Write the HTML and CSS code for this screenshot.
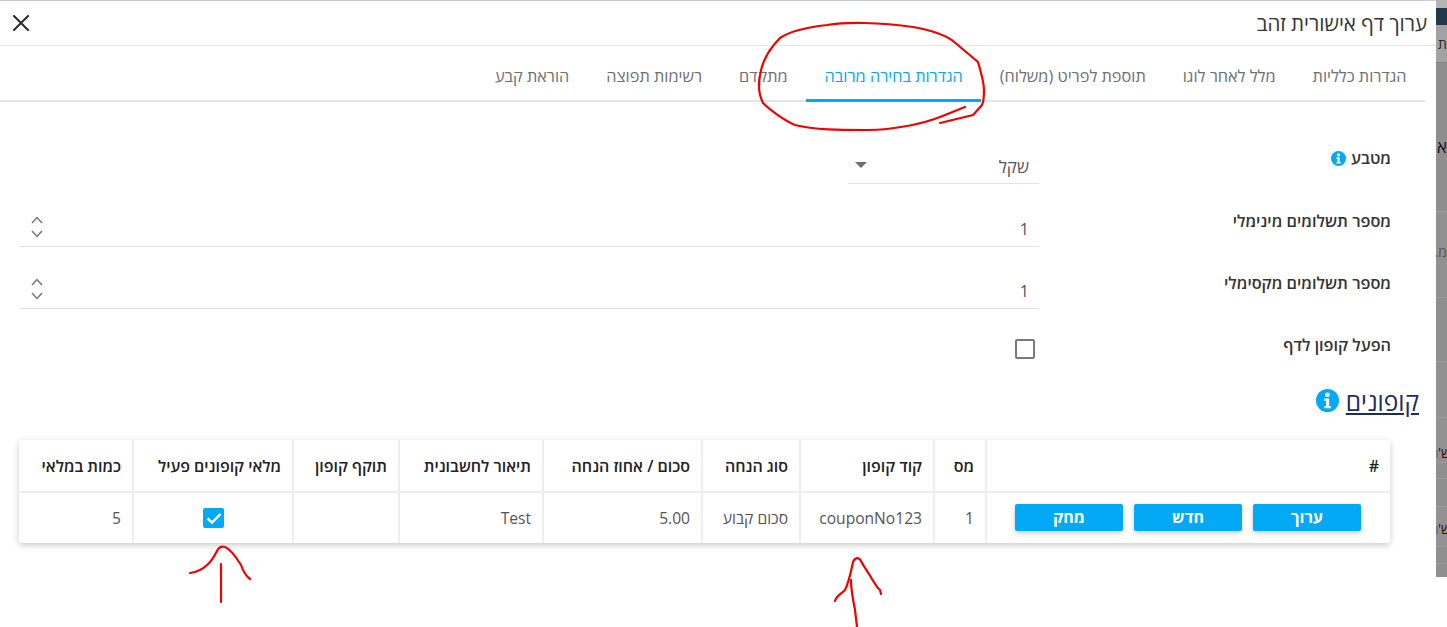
FILE: index.html
```html
<!DOCTYPE html>
<html lang="he" dir="rtl">
<head>
<meta charset="utf-8">
<title>ערוך דף אישורית זהב</title>
<link rel="stylesheet" href="styles.css">
</head>
<body>
<div class="stage">
  <aside class="backdrop">
    <div class="bd bd-top"></div>
    <div class="bd bd-nav"></div>
    <div class="bd bd-tab"><span>ת</span></div>
    <div class="bd bd-a"><span class="big">א</span></div>
    <div class="bd bd-b"><span class="dim">מ.</span></div>
    <div class="bd bd-c"></div>
    <div class="bd bd-d"></div>
    <div class="bd bd-e bd-mark"><i></i><span>ש'</span></div>
    <div class="bd bd-f"></div>
    <div class="bd bd-g"></div>
    <div class="bd bd-h bd-mark"><i></i><span>ש'</span></div>
    <div class="bd bd-i"></div>
    <div class="bd bd-j"></div>
  </aside>
  <main class="dialog">
    <header class="head">
      <h1 class="title">ערוך דף אישורית זהב</h1>
      <button class="close" aria-label="סגור">
        <svg width="16" height="16" viewBox="0 0 16 16"><path d="M1 1L15 15M15 1L1 15" stroke="#2b2b2b" stroke-width="2" fill="none" stroke-linecap="square"/></svg>
      </button>
    </header>
    <nav class="tabs">
      <a class="tab">הגדרות כלליות</a>
      <a class="tab">מלל לאחר לוגו</a>
      <a class="tab">תוספת לפריט (משלוח)</a>
      <a class="tab active">הגדרות בחירה מרובה</a>
      <a class="tab">מתקדם</a>
      <a class="tab">רשימות תפוצה</a>
      <a class="tab">הוראת קבע</a>
    </nav>
    <form class="form">
      <div class="row">
        <div class="label">מטבע
          <svg class="info-s" viewBox="0 0 22 22"><circle cx="11" cy="11" r="11" fill="#03a9f4"/><circle cx="11" cy="5.6" r="2.3" fill="#fff"/><path d="M8 9.2h4.6v7h1.6v2.2H8v-2.2h1.6v-4.8H8z" fill="#fff"/></svg>
        </div>
        <div class="select"><span>שקל</span><b class="caret"></b></div>
      </div>
      <div class="row">
        <div class="label">מספר תשלומים מינימלי</div>
        <div class="number"><span>1</span>
          <svg class="spin" width="12" height="24" viewBox="0 0 12 24"><path d="M1 7L6 1.5L11 7M1 15L6 20.5L11 15" fill="none" stroke="#777" stroke-width="1.5"/></svg>
        </div>
      </div>
      <div class="row">
        <div class="label">מספר תשלומים מקסימלי</div>
        <div class="number"><span>1</span>
          <svg class="spin" width="12" height="24" viewBox="0 0 12 24"><path d="M1 7L6 1.5L11 7M1 15L6 20.5L11 15" fill="none" stroke="#777" stroke-width="1.5"/></svg>
        </div>
      </div>
      <div class="row">
        <div class="label">הפעל קופון לדף</div>
        <div class="check-field"><span class="box"></span></div>
      </div>
    </form>
    <h2 class="section"><a class="section-link">קופונים</a>
      <svg class="info-l" viewBox="0 0 22 22"><circle cx="11" cy="11" r="11" fill="#03a9f4"/><circle cx="11" cy="5.6" r="2.3" fill="#fff"/><path d="M8 9.2h4.6v7h1.6v2.2H8v-2.2h1.6v-4.8H8z" fill="#fff"/></svg>
    </h2>
    <div class="card">
      <table class="grid">
        <colgroup>
          <col class="c1"><col class="c2"><col class="c3"><col class="c4"><col class="c5"><col class="c6"><col class="c7"><col class="c8"><col class="c9">
        </colgroup>
        <thead>
          <tr>
            <th>#</th><th>מס</th><th>קוד קופון</th><th>סוג הנחה</th><th>סכום / אחוז הנחה</th><th>תיאור לחשבונית</th><th>תוקף קופון</th><th>מלאי קופונים פעיל</th><th>כמות במלאי</th>
          </tr>
        </thead>
        <tbody>
          <tr>
            <td><div class="btns"><button type="button" class="btn">ערוך</button><button type="button" class="btn">חדש</button><button type="button" class="btn">מחק</button></div></td>
            <td>1</td><td>couponNo123</td><td>סכום קבוע</td><td>5.00</td><td>Test</td><td></td>
            <td class="center"><span class="checked"><svg width="20" height="20" viewBox="0 0 20 20"><path d="M3.5 10.5L8 14.5L16.5 6" fill="none" stroke="#fff" stroke-width="2.4"/></svg></span></td>
            <td>5</td>
          </tr>
        </tbody>
      </table>
    </div>
  </main>
  <svg class="marks" width="1447" height="627" viewBox="0 0 1447 627">
    <g fill="none" stroke="#f00000" stroke-width="2.2" stroke-linecap="round" stroke-linejoin="round">
      <path d="M965 107L940 117C925 123 895 130 867 130C840 130 815 130 795 125C785 121 770 110 763 103C759 95 758 85 760 75C762 62 768 50 780 38C790 31 810 27 827 25C845 22 880 22 913 27C930 30 945 35 953 41L978 62C981 72 984 82 984 90C984 98 983 103 982 105L973 115L940 123"/>
      <path d="M190 573C197 572 203 569 207 565C212 561 214 557 217 551C219 547 222 546 225 547C230 549 236 557 241 565C243 571 246 576 250 579"/>
      <path d="M221 564V602"/>
      <path d="M835 601C836 596 841 594 845 590C848 584 851 572 853 562C855 557 859 557 861 561C864 567 868 572 872 579C875 584 878 589 880 590L881 594"/>
      <path d="M851 580C851 590 853 600 855 610L857 627"/>
    </g>
  </svg>
</div>
</body>
</html>
```
FILE: styles.css
```css
* { box-sizing: border-box; }
html, body { margin: 0; padding: 0; background: #fff; }
body {
  font-family: "Open Sans", "Noto Sans", "Liberation Sans", sans-serif;
  font-size: 16px;
  color: #333;
  width: 1447px;
  height: 627px;
  overflow: hidden;
}
.stage {
  position: relative;
  display: flex;
  align-items: flex-start;
  width: 1447px;
  height: 627px;
  border-top: 1px solid #c6ccd1;
}
.backdrop {
  width: 11px;
  height: 577px;
  flex: none;
  background: #8d8d8d;
  display: flex;
  flex-direction: column;
  overflow: hidden;
  margin-top: -1px;
}
.bd {
  width: 11px;
  flex: none;
  border-bottom: 1px solid #9c9c9c;
  overflow: hidden;
  white-space: nowrap;
  font-size: 14px;
  line-height: 1;
  color: #2a2a2a;
}
.bd-top { height: 8px; background: #b4b4b4; border: 0; }
.bd-nav { height: 17px; background: #21384a; border: 0; }
.bd-tab { height: 38px; background: #a2a2a2; padding-top: 12px; border-color: #858585; }
.bd-a { height: 149px; padding-top: 75px; background: #8e8e8e; }
.bd-a .big { font-size: 17px; color: #14142a; }
.bd-b { height: 86px; padding-top: 33px; background: #909090; }
.bd-b .dim { color: #555; }
.bd-c { height: 64px; background: #8f8f8f; }
.bd-d { height: 56px; background: #919191; }
.bd-e { height: 45px; background: #929292; }
.bd-f { height: 16px; background: #8f8f8f; }
.bd-g { height: 28px; background: #8f8f8f; }
.bd-h { height: 40px; background: #929292; }
.bd-i { height: 17px; background: #8f8f8f; }
.bd-j { flex: 1; background: #8f8f8f; border: 0; }
.bd-mark {
  direction: ltr;
  display: flex;
  align-items: flex-start;
  color: #3a1010;
}
.bd-e.bd-mark { padding-top: 28px; }
.bd-h.bd-mark { padding-top: 15px; }
.bd-mark i { display: block; flex: none; width: 2px; height: 8px; margin-top: 4px; background: #6c7a94; }
.bd-mark span { direction: rtl; flex: none; }

.dialog {
  width: 1436px;
  height: 626px;
  flex: none;
  background: #fff;
  border-radius: 0 5px 0 0;
  display: flex;
  flex-direction: column;
}
.head {
  height: 45px;
  flex: none;
  border-bottom: 1px solid #e6e6e6;
  display: flex;
  align-items: center;
  justify-content: space-between;
  padding: 0 9px 0 13px;
}
.title {
  margin: 0;
  font-size: 20.5px;
  font-weight: 400;
  color: #333;
  line-height: 24px;
}
.close {
  border: 0;
  background: none;
  padding: 0;
  width: 16px;
  height: 16px;
  display: block;
}
.close svg { display: block; }
.tabs {
  display: flex;
  flex: none;
  height: 56px;
  margin-right: 11px;
  border-bottom: 2px solid #e4e4e4;
}
.tab {
  padding: 0 18.5px;
  height: 56px;
  line-height: 61px;
  font-size: 16.3px;
  color: #6f6f6f;
  white-space: nowrap;
}
.tab.active {
  color: #03a9f4;
  border-bottom: 3px solid #03a9f4;
}
.form {
  padding: 26.4px 45px 0 19px;
  display: flex;
  flex-direction: column;
  flex: none;
}
.row {
  height: 62.3px;
  display: flex;
  flex: none;
  align-items: flex-start;
}
.label {
  padding-top: 20px;
  font-size: 16.3px;
  font-weight: 600;
  color: #333;
  line-height: 20px;
  display: flex;
  align-items: center;
  gap: 5px;
  white-space: nowrap;
  width: 352px;
  flex: none;
}
.info-s { width: 15px; height: 15px; flex: none; }
.select {
  width: 191px;
  height: 56px;
  border-bottom: 1px solid #e2e2e2;
  display: flex;
  justify-content: space-between;
  align-items: flex-end;
  padding: 0 10px 6px 7px;
  font-size: 17px;
  color: #555;
  line-height: 20px;
}
.caret {
  width: 0;
  height: 0;
  border-left: 6px solid transparent;
  border-right: 6px solid transparent;
  border-top: 6px solid #6f6f6f;
  margin-bottom: 9px;
}
.number {
  width: 1020px;
  height: 56px;
  border-bottom: 1px solid #e2e2e2;
  display: flex;
  justify-content: space-between;
  align-items: flex-end;
  padding: 0 10px 7px 12px;
  color: #555;
  line-height: 20px;
}
.spin { display: block; transform: translateY(1px); }
.check-field { width: 1020px; height: 56px; padding: 24px 4px 0 0; }
.box {
  display: block;
  width: 20px;
  height: 20px;
  border: 2px solid #7a7a7a;
  border-radius: 2px;
}
.section {
  margin: 6px 0 0;
  padding: 0 17px 0 0;
  height: 36px;
  display: flex;
  align-items: center;
  gap: 7px;
  font-size: 24.5px;
  font-weight: 400;
  line-height: 32px;
  flex: none;
}
.section-link { color: #1d2c5e; text-decoration: underline; }
.info-l { width: 23px; height: 23px; flex: none; transform: translateY(-1px); }
.card {
  margin: 20px 46px 0 0;
  width: 1371px;
  flex: none;
  border-radius: 3px;
  box-shadow: 0 2px 6px rgba(0,0,0,.22);
  overflow: hidden;
  background: #fff;
}
.grid {
  width: 100%;
  table-layout: fixed;
  border-collapse: collapse;
}
.c1 { width: 404px; }
.c2 { width: 52px; }
.c3 { width: 134px; }
.c4 { width: 98px; }
.c5 { width: 159px; }
.c6 { width: 144px; }
.c7 { width: 106px; }
.c8 { width: 160px; }
.c9 { width: 114px; }
.grid th, .grid td {
  padding: 0 11px;
  text-align: right;
  border: 2px solid #eeeeee;
  line-height: 20px;
  white-space: nowrap;
}
.grid tr > *:first-child { border-right: 0; }
.grid tr > *:last-child { border-left: 0; }
.grid thead th { border-top: 0; height: 52px; padding-top: 2px; font-size: 16px; font-weight: 600; color: #222; }
.grid tbody td { border-bottom: 0; height: 51px; font-size: 15.6px; color: #555; }
.grid td.center { text-align: center; }
.btns { display: flex; gap: 11px; padding-right: 18px; }
.btn {
  width: 108px;
  height: 27px;
  flex: none;
  border: 0;
  border-radius: 2px;
  background: #03a9f4;
  color: #fff;
  font-family: inherit;
  font-size: 16px;
  font-weight: 700;
  line-height: 27px;
  padding: 0;
  box-shadow: 0 2px 5px rgba(0,0,0,.22);
}
.checked {
  display: inline-block;
  width: 21px;
  height: 20px;
  background: #03a9f4;
  border-radius: 2px;
  vertical-align: middle;
}
.checked svg { display: block; }
.marks { position: absolute; left: 0; top: -1px; pointer-events: none; }
```
